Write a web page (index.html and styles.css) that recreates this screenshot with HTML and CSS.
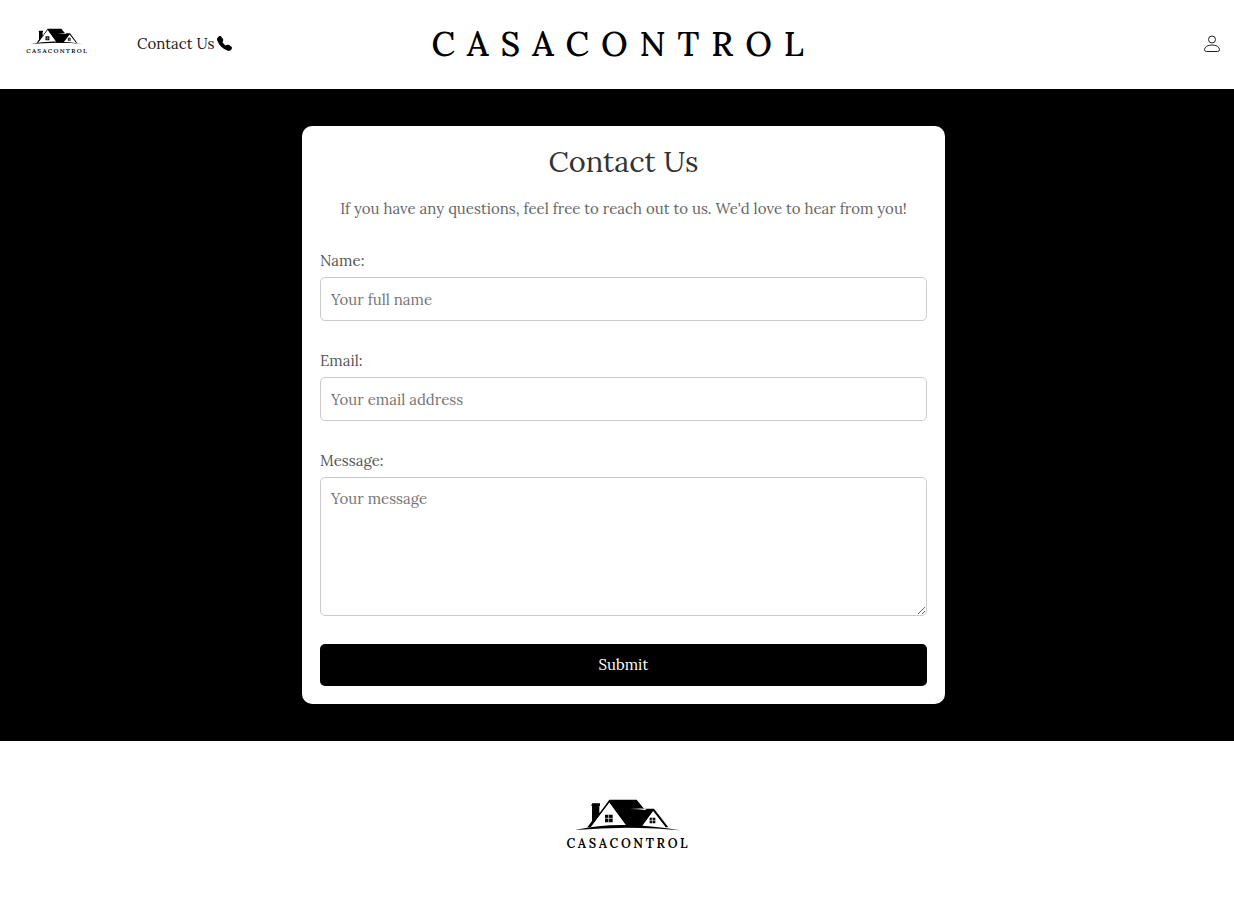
FILE: index.html
```html
<!DOCTYPE html>
<html lang="en">
<head>
<meta charset="utf-8">
<meta name="viewport" content="width=device-width, initial-scale=1">
<title>Contact Us - CasaControl</title>
<link rel="stylesheet" href="styles.css">
</head>
<body>
<header class="header">
  <nav class="nav">
    <a href="#" aria-label="CasaControl home">
      <svg class="logo logo-small" viewBox="48 38 366 156">
        <g id="house">
          <path d="M126 54h24v8h-2v22l30-41h82l22 27h30l43 56h-8l-37-48-34 46-2 2h-42l-54-74-56 74h-10l14-19V62h-2z" fill="#000"/>
          <path d="M178 52l-54 73h107z" fill="#fff"/>
          <path d="M309 78l-34 46h70z" fill="#fff"/>
          <path d="M240 71q26-3 50-1l-4 4q-22-3-46-3z" fill="#fff"/>
          <path d="M165 88h23v23h-23zM299 97h17v17h-17z" fill="#000"/>
          <path d="M176 88v23M165 99h23M307 97v17M299 105h17" stroke="#fff" stroke-width="2"/>
          <path d="M76 134q76-17 156-15t158 16q-80-9-158-8t-156 7z" fill="#000"/>
        </g>
        <text class="logo-text" x="235" y="187" text-anchor="middle">CASACONTROL</text>
      </svg>
    </a>
    <a class="contact-link" href="#contact">Contact Us
      <svg class="phone" viewBox="0 0 16 16" aria-hidden="true"><path fill-rule="evenodd" d="M1.885.511a1.745 1.745 0 0 1 2.61.163L6.29 2.98c.329.423.445.974.315 1.494l-.547 2.19a.68.68 0 0 0 .178.643l2.457 2.457a.68.68 0 0 0 .644.178l2.189-.547a1.75 1.75 0 0 1 1.494.315l2.306 1.794c.829.645.905 1.87.163 2.611l-1.034 1.034c-.74.74-1.846 1.065-2.877.702a18.6 18.6 0 0 1-7.01-4.42 18.6 18.6 0 0 1-4.42-7.009c-.362-1.03-.037-2.137.703-2.877z"/></svg>
    </a>
  </nav>
  <div class="brand">CASACONTROL</div>
  <a class="account" href="#" aria-label="Account"><svg class="person" viewBox="0 0 18 18" fill="none" stroke="#222" aria-hidden="true"><circle cx="9" cy="4.500" r="3.500"/><path d="M1.500 14.500C1.500 8.500 16.500 8.500 16.500 14.500Q16.500 16.500 14.500 16.500H3.500Q1.500 16.500 1.500 14.500z"/></svg></a>
</header>
<main class="main">
  <section class="card" id="contact">
    <h1 class="title">Contact Us</h1>
    <p class="intro">If you have any questions, feel free to reach out to us. We'd love to hear from you!</p>
    <form class="form">
      <div class="field">
        <label class="label" for="name">Name:</label>
        <input class="control" id="name" type="text" placeholder="Your full name">
      </div>
      <div class="field">
        <label class="label" for="email">Email:</label>
        <input class="control" id="email" type="email" placeholder="Your email address">
      </div>
      <div class="field">
        <label class="label" for="message">Message:</label>
        <textarea class="control message" id="message" placeholder="Your message"></textarea>
      </div>
      <button class="submit" type="submit">Submit</button>
    </form>
  </section>
</main>
<footer class="footer">
  <svg class="logo logo-large" viewBox="48 38 366 156" role="img" aria-label="CasaControl">
    <use href="#house"/>
    <text class="logo-text" x="235" y="187" text-anchor="middle">CASACONTROL</text>
  </svg>
</footer>
</body>
</html>
```
FILE: styles.css
```css
* { box-sizing: border-box; }
body {
  margin: 0;
  background: #fff;
  color: #222;
  font-family: Lora, "Liberation Serif", serif;
  font-size: 15px;
  line-height: 24px;
}
.logo { display: block; overflow: visible; }
.logo-small { width: 61px; height: 26px; margin-top: -6px; }
.logo-large { width: 122px; height: 52px; }
.logo-text {
  font-family: Lora, "Liberation Serif", serif;
  font-size: 38px;
  font-weight: 600;
  letter-spacing: 8px;
}
.header {
  display: grid;
  grid-template-columns: 1fr auto 1fr;
  align-items: center;
  min-height: 89px;
  padding: 0 13px 2px 26px;
}
.nav { display: flex; align-items: center; gap: 50px; }
.contact-link {
  display: flex;
  align-items: center;
  gap: 2px;
  color: #222;
  text-decoration: none;
}
.phone { width: 15px; height: 15px; fill: #000; }
.brand {
  color: #000;
  font-size: 34px;
  font-weight: 500;
  line-height: 40px;
  letter-spacing: 12px;
}
.account { justify-self: end; }
.person { display: block; width: 18px; height: 18px; }
.main {
  display: flex;
  justify-content: center;
  padding: 37px 0 37px 13px;
  background: #000;
}
.card {
  width: 100%;
  max-width: 643px;
  padding: 18px;
  border-radius: 10px;
  background: #fff;
}
.title {
  margin: 0 0 17px;
  color: #333;
  font-size: 29px;
  font-weight: normal;
  line-height: 36px;
  text-align: center;
}
.intro { margin: 0 0 28px; color: #666; text-align: center; }
.form { display: flex; flex-direction: column; gap: 28px; }
.field { display: flex; flex-direction: column; gap: 4px; }
.label { color: #555; }
.control {
  width: 100%;
  height: 44px;
  padding: 9px 10px;
  border: 1px solid #ccc;
  border-radius: 5px;
  background: #fff;
  color: #333;
  font: inherit;
}
.control::placeholder { color: #757575; }
.message { height: 139px; resize: vertical; }
.submit {
  height: 42px;
  border: 0;
  border-radius: 5px;
  background: #000;
  color: #fff;
  font: inherit;
}
.footer {
  display: flex;
  justify-content: center;
  padding: 57px 0 64px 20px;
}
```
